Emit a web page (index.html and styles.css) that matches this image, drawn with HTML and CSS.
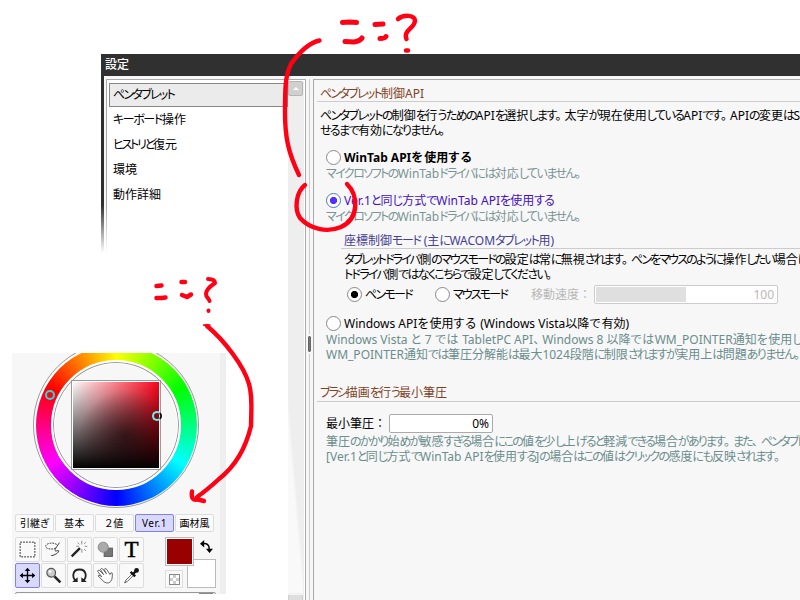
FILE: index.html
```html
<!DOCTYPE html>
<html lang="ja">
<head>
<meta charset="utf-8">
<title>設定</title>
<link rel="stylesheet" href="styles.css">
</head>
<body>
<main class="canvas">
  <section class="dialog">
    <header class="titlebar"><span data-w="24">設定</span></header>
    <div class="dialog-body">
      <nav class="list">
        <ul>
          <li class="selected"><span data-w="61">ペンタブレット</span></li>
          <li><span data-w="73">キーボード操作</span></li>
          <li><span data-w="64">ヒストリと復元</span></li>
          <li><span data-w="24">環境</span></li>
          <li><span data-w="48">動作詳細</span></li>
        </ul>
        <div class="scrollbar"><div class="scroll-btn"><i></i></div><div class="scroll-btn faint"></div></div>
      </nav>
      <div class="splitter"><i></i></div>
      <div class="pane">
        <h2><span data-w="104">ペンタブレット制御API</span></h2>
        <p class="intro"><span data-w="480">ペンタブレットの制御を行うためのAPIを選択します。太字が現在使用しているAPIです。APIの変更はS</span><span data-w="128">せるまで有効になりません。</span></p>
        <div class="option bold"><i class="radio"></i><span data-w="129">WinTab APIを使用する</span></div>
        <p class="note"><span data-w="258">マイクロソフトのWinTabドライバには対応していません。</span></p>
        <div class="option chosen"><i class="radio on"></i><span data-w="210">Ver.1と同じ方式でWinTab APIを使用する</span></div>
        <p class="note"><span data-w="258">マイクロソフトのWinTabドライバには対応していません。</span></p>
        <div class="sub">
          <h3><span data-w="210">座標制御モード (主にWACOMタブレット用)</span></h3>
          <p><span data-w="464">タブレットドライバ側のマウスモードの設定は常に無視されます。ペンをマウスのように操作したい場合は</span><span data-w="211">トドライバ側ではなくこちらで設定してください。</span></p>
          <div class="modes">
            <div class="mode pen"><i class="radio on"></i><span data-w="47">ペンモード</span></div>
            <div class="mode mouse"><i class="radio"></i><span data-w="54">マウスモード</span></div>
            <span class="disabled">移動速度：</span>
            <div class="slider"><i></i><b>100</b></div>
          </div>
        </div>
        <div class="option third"><i class="radio"></i><span data-w="285">Windows APIを使用する (Windows Vista以降で有効)</span></div>
        <p class="desc"><span data-w="477">Windows Vista と 7 では TabletPC API、Windows 8 以降ではWM_POINTER通知を使用し</span><span data-w="477">WM_POINTER通知では筆圧分解能は最大1024段階に制限されますが実用上は問題ありません。</span></p>
        <h2 class="second"><span data-w="127">ブラシ描画を行う最小筆圧</span></h2>
        <div class="pressure"><span class="label">最小筆圧：</span><div class="field">0%</div></div>
        <p class="desc"><span data-w="480">筆圧のかかり始めが敏感すぎる場合にこの値を少し上げると軽減できる場合があります。また、ペンタブレ</span><span data-w="457">[Ver.1と同じ方式でWinTab APIを使用する]の場合はこの値はクリックの感度にも反映されます。</span></p>
      </div>
    </div>
  </section>
  <div class="fade-left"></div>

  <section class="tools">
    <div class="wheel-area">
      <div class="wheel"><div class="hue"></div><div class="hole"></div><div class="square"></div>
        <i class="knob hue-knob"></i><i class="knob sv-knob"></i></div>
    </div>
    <div class="tabs">
      <button><span data-w="29">引継ぎ</span></button><button><span data-w="21">基本</span></button><button><span data-w="19">２値</span></button><button class="active"><span data-w="25">Ver.1</span></button><button><span data-w="30">画材風</span></button>
    </div>
    <div class="toolbox">
      <div class="grid">
        <div class="tool"><svg viewBox="0 0 25 25"><rect x="4.500" y="4.500" width="16" height="16" fill="none" stroke="#222" stroke-dasharray="2 1.200"/></svg></div>
        <div class="tool"><svg viewBox="0 0 25 25" fill="none" stroke="#333"><path d="M16 7C11 4 4 6 4 9s7 4 11 2" stroke-dasharray="2 1"/><path d="M19 5l-4 6q-2 4 1 3t2 1-6 4h-2"/></svg></div>
        <div class="tool"><svg viewBox="0 0 25 25" fill="none"><path d="M4 20L13 11" stroke="#222" stroke-width="2.500"/><path d="M15 3v4M15 12v4M9 9h3M18 9h3M10.500 5l2 2M17.500 6.500l2-2M17.500 12l2 2" stroke="#888"/></svg></div>
        <div class="tool"><svg viewBox="0 0 25 25"><rect x="11" y="11" width="9" height="9" fill="#777" stroke="#555"/><circle cx="10" cy="10" r="5.500" fill="#aaa" stroke="#888"/></svg></div>
        <div class="tool letter">T</div>
        <div class="tool active"><svg viewBox="0 0 25 25" fill="none" stroke="#000" stroke-width="1.500"><path d="M12.500 6v13M6 12.500h13"/><path d="M12.500 4l3 3.500h-6zM12.500 21l3-3.500h-6zM4 12.500l3.500-3v6zM21 12.500l-3.500-3v6z" fill="#000" stroke="none"/></svg></div>
        <div class="tool"><svg viewBox="0 0 25 25"><path d="M13.500 13.500l6.500 6.500" stroke="#222" stroke-width="2.800"/><circle cx="10" cy="9.500" r="4.700" fill="#ccc" stroke="#555" stroke-width="1.300"/><circle cx="8.800" cy="8.200" r="1.500" fill="#fff"/></svg></div>
        <div class="tool"><svg viewBox="0 0 25 25"><path d="M9 18.500C4 15 4.500 6 12.500 6s8.500 9 3.500 12.500" fill="none" stroke="#222" stroke-width="2"/><path d="M4.500 19.500h6v-5zM20.500 19.500h-6v-5z" fill="#222"/></svg></div>
        <div class="tool"><svg viewBox="0 0 25 25" fill="#fff" stroke="#555"><path d="M11 19.500L4.500 13q0-1.500 2-.5l2 1.500L4 8q0-2 2-1l4.500 4.500L7 6q.5-2 2.500-.5l4 5L11 6q.5-2 2.500-.5l4 6 1-2q2 0 1.500 2l-.5 5q-1 3-3.500 4-3 .5-5-1z"/></svg></div>
        <div class="tool"><svg viewBox="0 0 25 25"><path d="M13.500 10.500l-7 7-1.500 3 3-1.500 7-7" fill="#fff" stroke="#555"/><path d="M11.500 8.500l5 5M14 11l4-4" stroke="#111" stroke-width="2.500"/><circle cx="18" cy="7" r="2.600" fill="#111"/></svg></div>
      </div>
      <div class="swatches">
        <div class="white"></div><div class="red"></div>
        <div class="checker"><i></i></div>
        <svg class="swap" viewBox="0 0 14 14"><path d="M3 4q7-1 7 6" fill="none" stroke="#000" stroke-width="1.600"/><path d="M0 4l4.500-4v8zM10.200 14L6.400 9.500H14z"/></svg>
      </div>
    </div>
    <div class="bottom-bar"><i></i></div>
  </section>

  <svg class="ink" viewBox="0 0 800 600" fill="none" stroke="#ff0014" stroke-linecap="round" stroke-linejoin="round">
    <g stroke-width="4.400">
      <path d="M319.500 40.500C308 43 298 54 291 64C285 75 285 91 285 112C285 137 288 152 299 175"/>
      <path d="M305 185C296 192 294 209 300 218C310 229 327 233 341 227C360 218 358 195 347 184"/>
      <path d="M207 326C224 340 244 366 249 384C253 397 251 413 251 426C245 451 233 468 219 479Q207 490 197 497"/>
      <path d="M192 491.500C191 498 193 501 198 499.500L204 501"/>
    </g>
    <g stroke-width="5">
      <path d="M342.500 22.500l7-.5 7 .5M345 41.500l9 .5q6-1 8-4"/>
      <path d="M375 24.500l8-.5M380 38.500q5 0 6-2"/>
    </g>
    <path d="M398 19C403 14.500 415 14.500 415 21C414 29 403 30 406.500 39" stroke-width="4.500"/>
    <path d="M406 50.500h2" stroke-width="4.500"/>
    <g stroke-width="4.500">
      <path d="M156.500 286l5-.5M156.500 298h5l4-.5"/>
      <path d="M181.500 282h3.500M182 295l5 2 4-2.500"/>
      <path d="M208 279q7 0 7 4-9 6-9 11c0 4 3 4 3.500 7M208.500 310.500v.5" stroke-width="4"/>
    </g>
    <path d="M203.500 325l3.500 1 3-1z" stroke-width="1.500" fill="#ff0014"/>
  </svg>
</main>
<script src="fit.js"></script>
</body>
</html>
```
FILE: styles.css
```css
* { box-sizing: border-box; }
body { margin: 0; background: #fff; overflow: hidden; }
.canvas {
  position: relative; width: 800px; height: 600px; overflow: hidden; background: #fff;
  font: 12px/15px "Noto Sans", "Noto Sans CJK JP", sans-serif; color: #000;
}
h2, h3, p, ul { margin: 0; padding: 0; font-size: 12px; font-weight: 400; list-style: none; }
span { white-space: nowrap; }
[data-w] { display: inline-block; font-feature-settings: "palt"; letter-spacing: var(--tight, 0); }
p > [data-w] { display: block; width: max-content; }
.wide { letter-spacing: 0; }
.punct { font-feature-settings: normal; letter-spacing: -3px; }

.dialog { position: absolute; left: 101px; top: 54px; width: 712px; height: 560px; background: #f7f7f7; border-left: 3px solid #303030; }
.titlebar { height: 22px; background: #303030; color: #fff; padding: 2px 0 0 1px; line-height: 17px; font-weight: 500; }
.dialog-body { display: flex; height: 538px; padding: 3px 0 0 2px; }
.list { display: flex; width: 200px; height: 540px; border: 1px solid #aaa; padding: 1px 1px 2px 2px; background: #fff; }
.list ul { flex: 1; min-width: 0; padding-top: 2px; }
.list li { height: 25px; padding-left: 4px; line-height: 24px; }
.list li.selected { border: 1px solid #888; background: #ebebeb; height: 24px; line-height: 22px; padding-left: 3px; margin-bottom: 1px; }
.scrollbar { width: 16px; background: #eee; display: flex; flex-direction: column; justify-content: space-between; padding: 0 0 8px; }
.scroll-btn { height: 15px; width: 15px; border: 1px solid #b5b5b5; border-radius: 2px; background: #d0d0d0; display: grid; place-items: center; }
.scroll-btn i { border: 3px solid transparent; border-top: 0; border-bottom: 3px solid #fff; }
.scroll-btn.faint { opacity: .5; }
.splitter { width: 7px; display: grid; place-items: center; background: linear-gradient(#ccc, #ccc) 3px 0 / 1px 100% no-repeat; }
.splitter i { width: 3px; height: 16px; background: #777; border: 1px solid #666; border-radius: 1px; margin-bottom: 6px; outline: 2px solid #f7f7f7; }
.pane { flex: 1; min-width: 0; height: 540px; overflow: hidden; border: 1px solid #aaa; padding-left: 3px; }
.pane h2 { height: 22px; padding: 5px 0 0 3px; line-height: 17px; color: #82421f; border-bottom: 1px solid #ccc; }
.pane h2.second { margin-top: 18px; line-height: 16px; }
.intro { margin: 6px 0 0 3px; }
.option { display: flex; align-items: center; height: 16px; margin: 11px 0 0 9px; gap: 3px; }
.option.bold { font-weight: 700; }
.option.chosen { color: #4310c4; }
.option.third { margin-top: 12px; }
.radio { flex: none; width: 15px; height: 15px; border: 1px solid #888; border-radius: 50%; background: #fff; }
.radio.on { background: radial-gradient(circle, #000 3.2px, #fff 4px); }
.chosen .radio.on { background: radial-gradient(circle, #5030ff 3.2px, #fff 4px); border-color: #4a78c4; }
.note { height: 16px; line-height: 18px; margin-left: 9px; color: #789494; }
.sub { margin: 8px 0 0 24px; }
.sub h3 { height: 17px; line-height: 17px; color: #454091; padding-left: 3px; border-bottom: 1px solid #ccc; }
.sub p { margin: 3px 0 0 3px; }
.modes { display: flex; align-items: center; height: 18px; margin: 3px 0 0 6px; }
.mode { display: flex; align-items: center; gap: 3px; }
.mode.pen { width: 88px; }
.mode.mouse { width: 96px; }
.disabled { width: 63px; color: #b8b8b8; }
.slider { width: 184px; height: 19px; display: flex; justify-content: space-between; padding: 1px 3px 1px 1px; border: 1px solid #ccc; border-radius: 2px; background: #fff; color: #b8b8b8; line-height: 15px; }
.slider i { width: 90px; background: #dfdfdf; }
.slider b { font-weight: 400; }
.desc { margin: 1px 0 0 9px; color: #6a8d8d; }
.pressure { display: flex; align-items: center; height: 19px; margin: 12px 0 0 9px; gap: 3px; }
.label { width: 60px; }
.field { width: 104px; height: 19px; border: 1px solid #aaa; border-radius: 2px; background: #fff; text-align: right; padding-right: 3px; line-height: 17px; }
.fade-left {
  position: absolute; left: 100px; top: 205px; width: 203px; height: 395px;
  background: linear-gradient(#fff0, #fff 48px) 0 0 / 188px 100% no-repeat,
    linear-gradient(85deg, #fffa 45%, #fff0 55%) 188px 190px / 15px 200px no-repeat;
}

.tools { position: absolute; left: 12px; top: 353px; width: 214px; height: 241px; overflow: hidden; background: #f7f7f7; border-right: 6px solid #eee; }
.wheel-area { height: 161px; overflow: hidden; display: flex; align-items: flex-end; padding: 0 0 6px 21px; }
.wheel { flex: none; display: grid; place-items: center; width: 166px; height: 166px; border: 1px solid #999; border-radius: 50%; background: #fff; position: relative; }
.wheel > div { grid-area: 1 / 1; }
.hue { width: 161px; height: 161px; border-radius: 50%; background: conic-gradient(#ff0, #0f0 60deg, #0ff 120deg, #00f 180deg, #f0f 240deg, #f00 300deg, #ff0); }
.hole { width: 130px; height: 130px; border-radius: 50%; border: 2px solid #fff; background: #f7f7f7; box-shadow: inset 0 0 0 1px #999, inset 0 0 0 2px #fff; }
.square { width: 88px; height: 88px; border: 1px solid #fff; outline: 1px solid #999; background: radial-gradient(circle at 60% 62%, #0007, #0000 60%), linear-gradient(#0000, #000), linear-gradient(90deg, #fff, #ff0018); background-origin: border-box; }
.knob { position: absolute; width: 10px; height: 10px; border: 2.500px solid #20dfd0; border-radius: 50%; }
.hue-knob { left: 11px; top: 47px; }
.sv-knob { left: 118px; top: 68px; border-color: #68eded; border-right-color: #111; }
.tabs { display: flex; height: 18px; gap: 1px; padding-left: 3px; }
.tabs button { width: 39px; height: 18px; padding: 0; border: 1px solid #ddd; border-radius: 2px; background: #fafafa; font: 10px/14px "Noto Sans", "Noto Sans CJK JP", sans-serif; color: #000; }
.tabs button.active, .tool.active { background: #d9d9ff; border-color: #8080f0; }
.toolbox { display: flex; margin: 5px 0 0 3px; gap: 20px; }
.grid { display: grid; grid-template-columns: repeat(5, 25px); grid-auto-rows: 25px; gap: 1px; }
.tool { border: 1px solid #ddd; border-radius: 2px; background: #f9f9f9; }
.tool svg { display: block; width: 23px; height: 23px; }
.letter { font: 400 23px/24px "Liberation Serif", serif; text-align: center; -webkit-text-stroke: .5px #000; }
.swatches { position: relative; width: 52px; height: 52px; }
.red, .white { position: absolute; width: 29px; height: 29px; border: 1px solid #bbb; }
.red { left: 1px; top: 0; background: #900; box-shadow: inset 0 0 0 1px #fff; }
.white { left: 23px; top: 22px; background: #fff; }
.checker { position: absolute; left: 1px; top: 33px; width: 18px; height: 18px; border: 1px solid #ddd; display: grid; place-items: center; background: #fafafa; }
.checker i { width: 11px; height: 11px; border: 1px solid #888; background: conic-gradient(#ccc 25%, #fff 0 50%, #ccc 0 75%, #fff 0) 0 0 / 6px 6px; }
.swap { position: absolute; left: 36px; top: 3px; width: 13px; height: 13px; }
.bottom-bar { margin: 3px 4px 0 3px; height: 8px; border: 1px solid #999; border-radius: 2px; display: flex; justify-content: flex-end; padding-right: 2px; }
.bottom-bar i { width: 14px; background: #888; }
.ink { position: absolute; inset: 0; width: 800px; height: 600px; }
```
FILE: fit.js
```js
// Tighten the kana of each label so that it takes its nominal UI width.
// Kanji and Latin keep their advance; punctuation keeps a fixed, slightly reduced one.
document.querySelectorAll('[data-w]').forEach(function (el) {
  var text = el.textContent;
  var kana = text.match(/[\u3041-\u30ff]/g);
  el.textContent = '';
  text.split(/([、。]|[\u3041-\u30ff]+)/).forEach(function (part) {
    if (!part) return;
    if (/^[\u3041-\u30ff]/.test(part)) {
      el.appendChild(document.createTextNode(part));
      return;
    }
    var s = document.createElement('span');
    s.className = /^[、。]/.test(part) ? 'punct' : kana ? 'wide' : '';
    s.textContent = part;
    el.appendChild(s);
  });
  var diff = Number(el.dataset.w) - el.getBoundingClientRect().width;
  el.style.setProperty('--tight', diff / (kana ? kana.length : text.length) + 'px');
});
```
